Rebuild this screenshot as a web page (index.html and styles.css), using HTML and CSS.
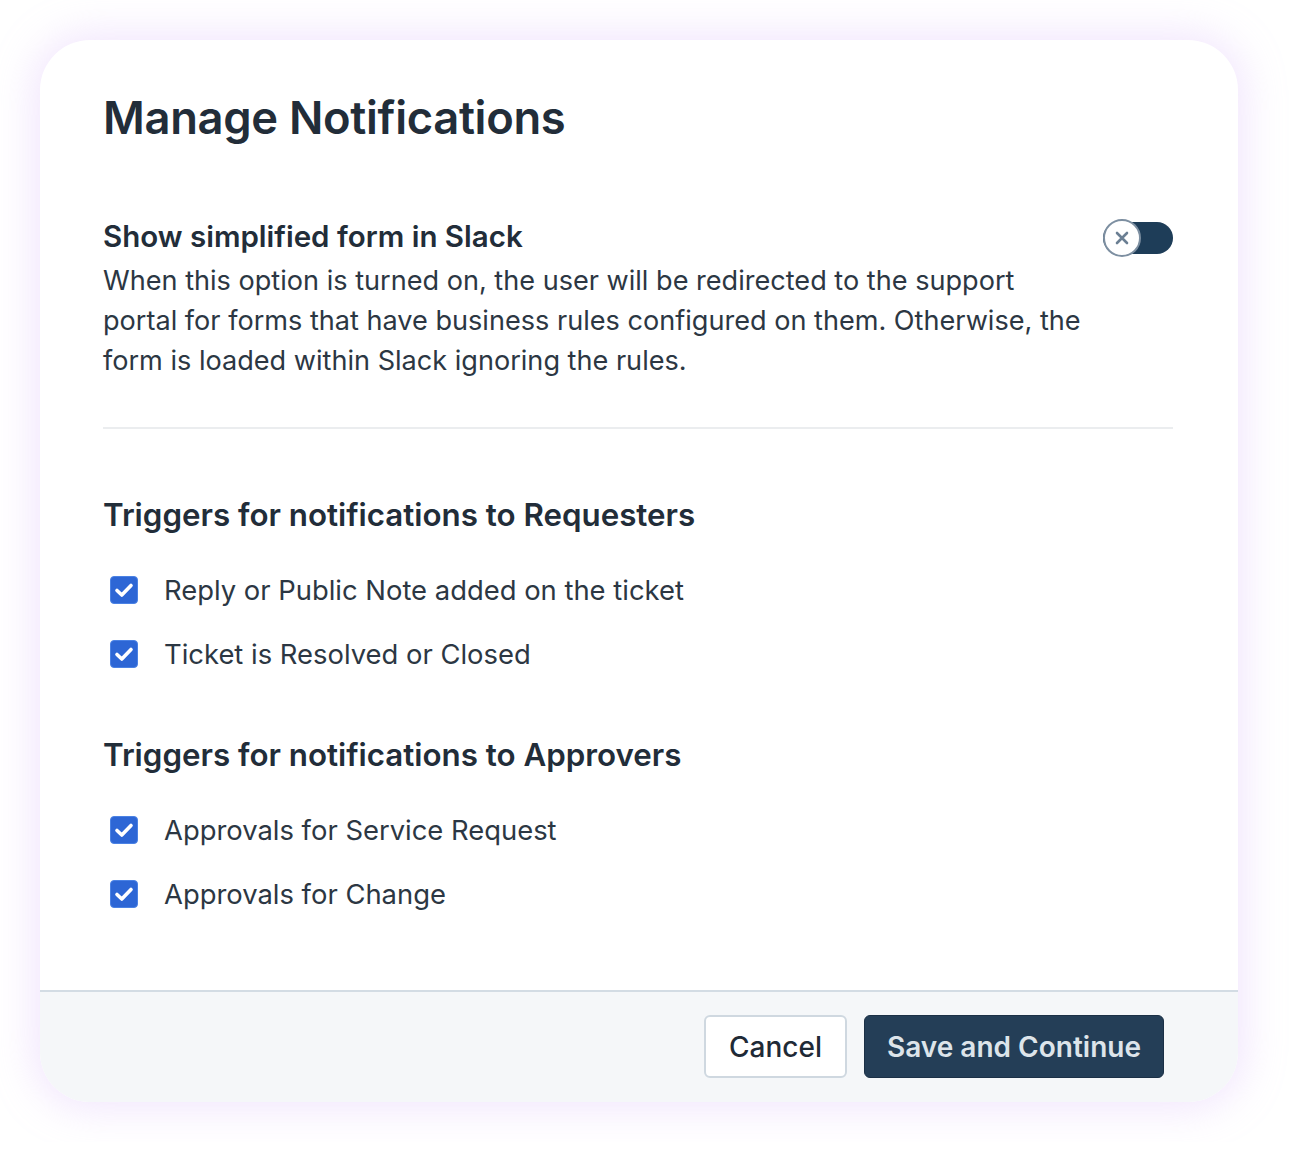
FILE: index.html
```html
<!DOCTYPE html>
<html lang="en">
<head>
<meta charset="utf-8">
<title>Manage Notifications</title>
<link rel="stylesheet" href="styles.css">
</head>
<body>
<div class="modal">
  <div class="modal-body">
    <h1 class="title">Manage Notifications</h1>

    <div class="setting">
      <div class="setting-text">
        <h2 class="setting-title">Show simplified form in Slack</h2>
        <p class="setting-desc">When this option is turned on, the user will be redirected to the support portal for forms that have business rules configured on them. Otherwise, the form is loaded within Slack ignoring the rules.</p>
      </div>
      <div class="toggle">
        <span class="toggle-knob">
          <svg width="16" height="16" viewBox="0 0 16 16"><path d="M3 3 L13 13 M13 3 L3 13" stroke="#6b7f93" stroke-width="2.6" stroke-linecap="round"/></svg>
        </span>
      </div>
    </div>

    <hr class="divider">

    <section class="group">
      <h3 class="group-title">Triggers for notifications to Requesters</h3>
      <label class="check-row"><span class="check"><svg width="28" height="28" viewBox="0 0 28 28"><path d="M7 14.5 L11.8 19 L21 9.5" fill="none" stroke="#fff" stroke-width="3.6" stroke-linecap="round" stroke-linejoin="round"/></svg></span><span class="check-label">Reply or Public Note added on the ticket</span></label>
      <label class="check-row"><span class="check"><svg width="28" height="28" viewBox="0 0 28 28"><path d="M7 14.5 L11.8 19 L21 9.5" fill="none" stroke="#fff" stroke-width="3.6" stroke-linecap="round" stroke-linejoin="round"/></svg></span><span class="check-label">Ticket is Resolved or Closed</span></label>
    </section>

    <section class="group group-second">
      <h3 class="group-title">Triggers for notifications to Approvers</h3>
      <label class="check-row"><span class="check"><svg width="28" height="28" viewBox="0 0 28 28"><path d="M7 14.5 L11.8 19 L21 9.5" fill="none" stroke="#fff" stroke-width="3.6" stroke-linecap="round" stroke-linejoin="round"/></svg></span><span class="check-label">Approvals for Service Request</span></label>
      <label class="check-row"><span class="check"><svg width="28" height="28" viewBox="0 0 28 28"><path d="M7 14.5 L11.8 19 L21 9.5" fill="none" stroke="#fff" stroke-width="3.6" stroke-linecap="round" stroke-linejoin="round"/></svg></span><span class="check-label">Approvals for Change</span></label>
    </section>
  </div>

  <div class="modal-footer">
    <button class="btn btn-secondary">Cancel</button>
    <button class="btn btn-primary">Save and Continue</button>
  </div>
</div>
</body>
</html>
```

FILE: styles.css
```css
* { box-sizing: border-box; }

html, body {
  margin: 0;
  padding: 0;
  background: #ffffff;
}

body {
  font-family: Inter, "Noto Sans", "Liberation Sans", sans-serif;
  color: #26313d;
  padding: 40px;
}

.modal {
  width: 1198px;
  height: 1062px;
  background: #ffffff;
  border-radius: 50px;
  box-shadow: 0 0 40px 6px rgba(214, 180, 250, 0.35);
  display: flex;
  flex-direction: column;
  overflow: hidden;
}

.modal-body {
  flex: 1;
  padding: 50px 65px 0 63px;
}

.title {
  margin: 0;
  font-size: 45.3px;
  line-height: 56px;
  font-weight: 600;
  color: #222d39;
  letter-spacing: -0.3px;
}

.setting {
  display: flex;
  justify-content: space-between;
  align-items: flex-start;
  margin-top: 72px;
}

.setting-text {
  width: 992px;
}

.setting-title {
  margin: 0;
  font-size: 29.5px;
  line-height: 36px;
  font-weight: 600;
  color: #222d39;
}

.setting-desc {
  margin: 7px 0 0;
  font-size: 27.1px;
  line-height: 40px;
  font-weight: 400;
  color: #2c3743;
}

.toggle {
  position: relative;
  width: 70px;
  height: 32px;
  margin-top: 4px;
  background: #1e3d58;
  border-radius: 16px;
  flex-shrink: 0;
}

.toggle-knob {
  position: absolute;
  left: 0;
  top: -3px;
  width: 38px;
  height: 38px;
  border-radius: 50%;
  background: #ffffff;
  border: 2px solid #7d8fa1;
  display: flex;
  align-items: center;
  justify-content: center;
}

.divider {
  margin: 46px 0 0;
  border: 0;
  height: 2px;
  background: #ebedef;
}

.group {
  display: flex;
  flex-direction: column;
  margin-top: 66px;
}

.group-second {
  margin-top: 49px;
}

.group-title {
  margin: 0 0 23px;
  font-size: 31.3px;
  line-height: 40px;
  font-weight: 600;
  color: #222d39;
}

.check-row {
  display: flex;
  align-items: center;
  height: 64px;
  padding-left: 7px;
}

.check {
  width: 28px;
  height: 28px;
  border-radius: 4px;
  background: #2d66d5;
  border: 1px solid #4b82e4;
  display: flex;
  align-items: center;
  justify-content: center;
  flex-shrink: 0;
  overflow: hidden;
}

.check svg {
  flex-shrink: 0;
}

.check-label {
  margin-left: 26px;
  font-size: 27.4px;
  color: #2c3743;
}

.modal-footer {
  height: 112px;
  border-top: 2px solid #d3dce4;
  background: #f5f7f9;
  display: flex;
  justify-content: flex-end;
  align-items: flex-start;
  gap: 17px;
  padding: 23px 74px 0 0;
}

.btn {
  height: 63px;
  border-radius: 6px;
  font-family: Inter, "Noto Sans", "Liberation Sans", sans-serif;
  font-size: 28px;
  cursor: pointer;
}

.btn-secondary {
  width: 143px;
  background: #ffffff;
  border: 2px solid #cfd8e0;
  color: #1f2a36;
  font-weight: 500;
}

.btn-primary {
  width: 300px;
  background: #243e57;
  border: 1px solid #1b3046;
  color: #dde4ea;
  font-weight: 600;
}
```
